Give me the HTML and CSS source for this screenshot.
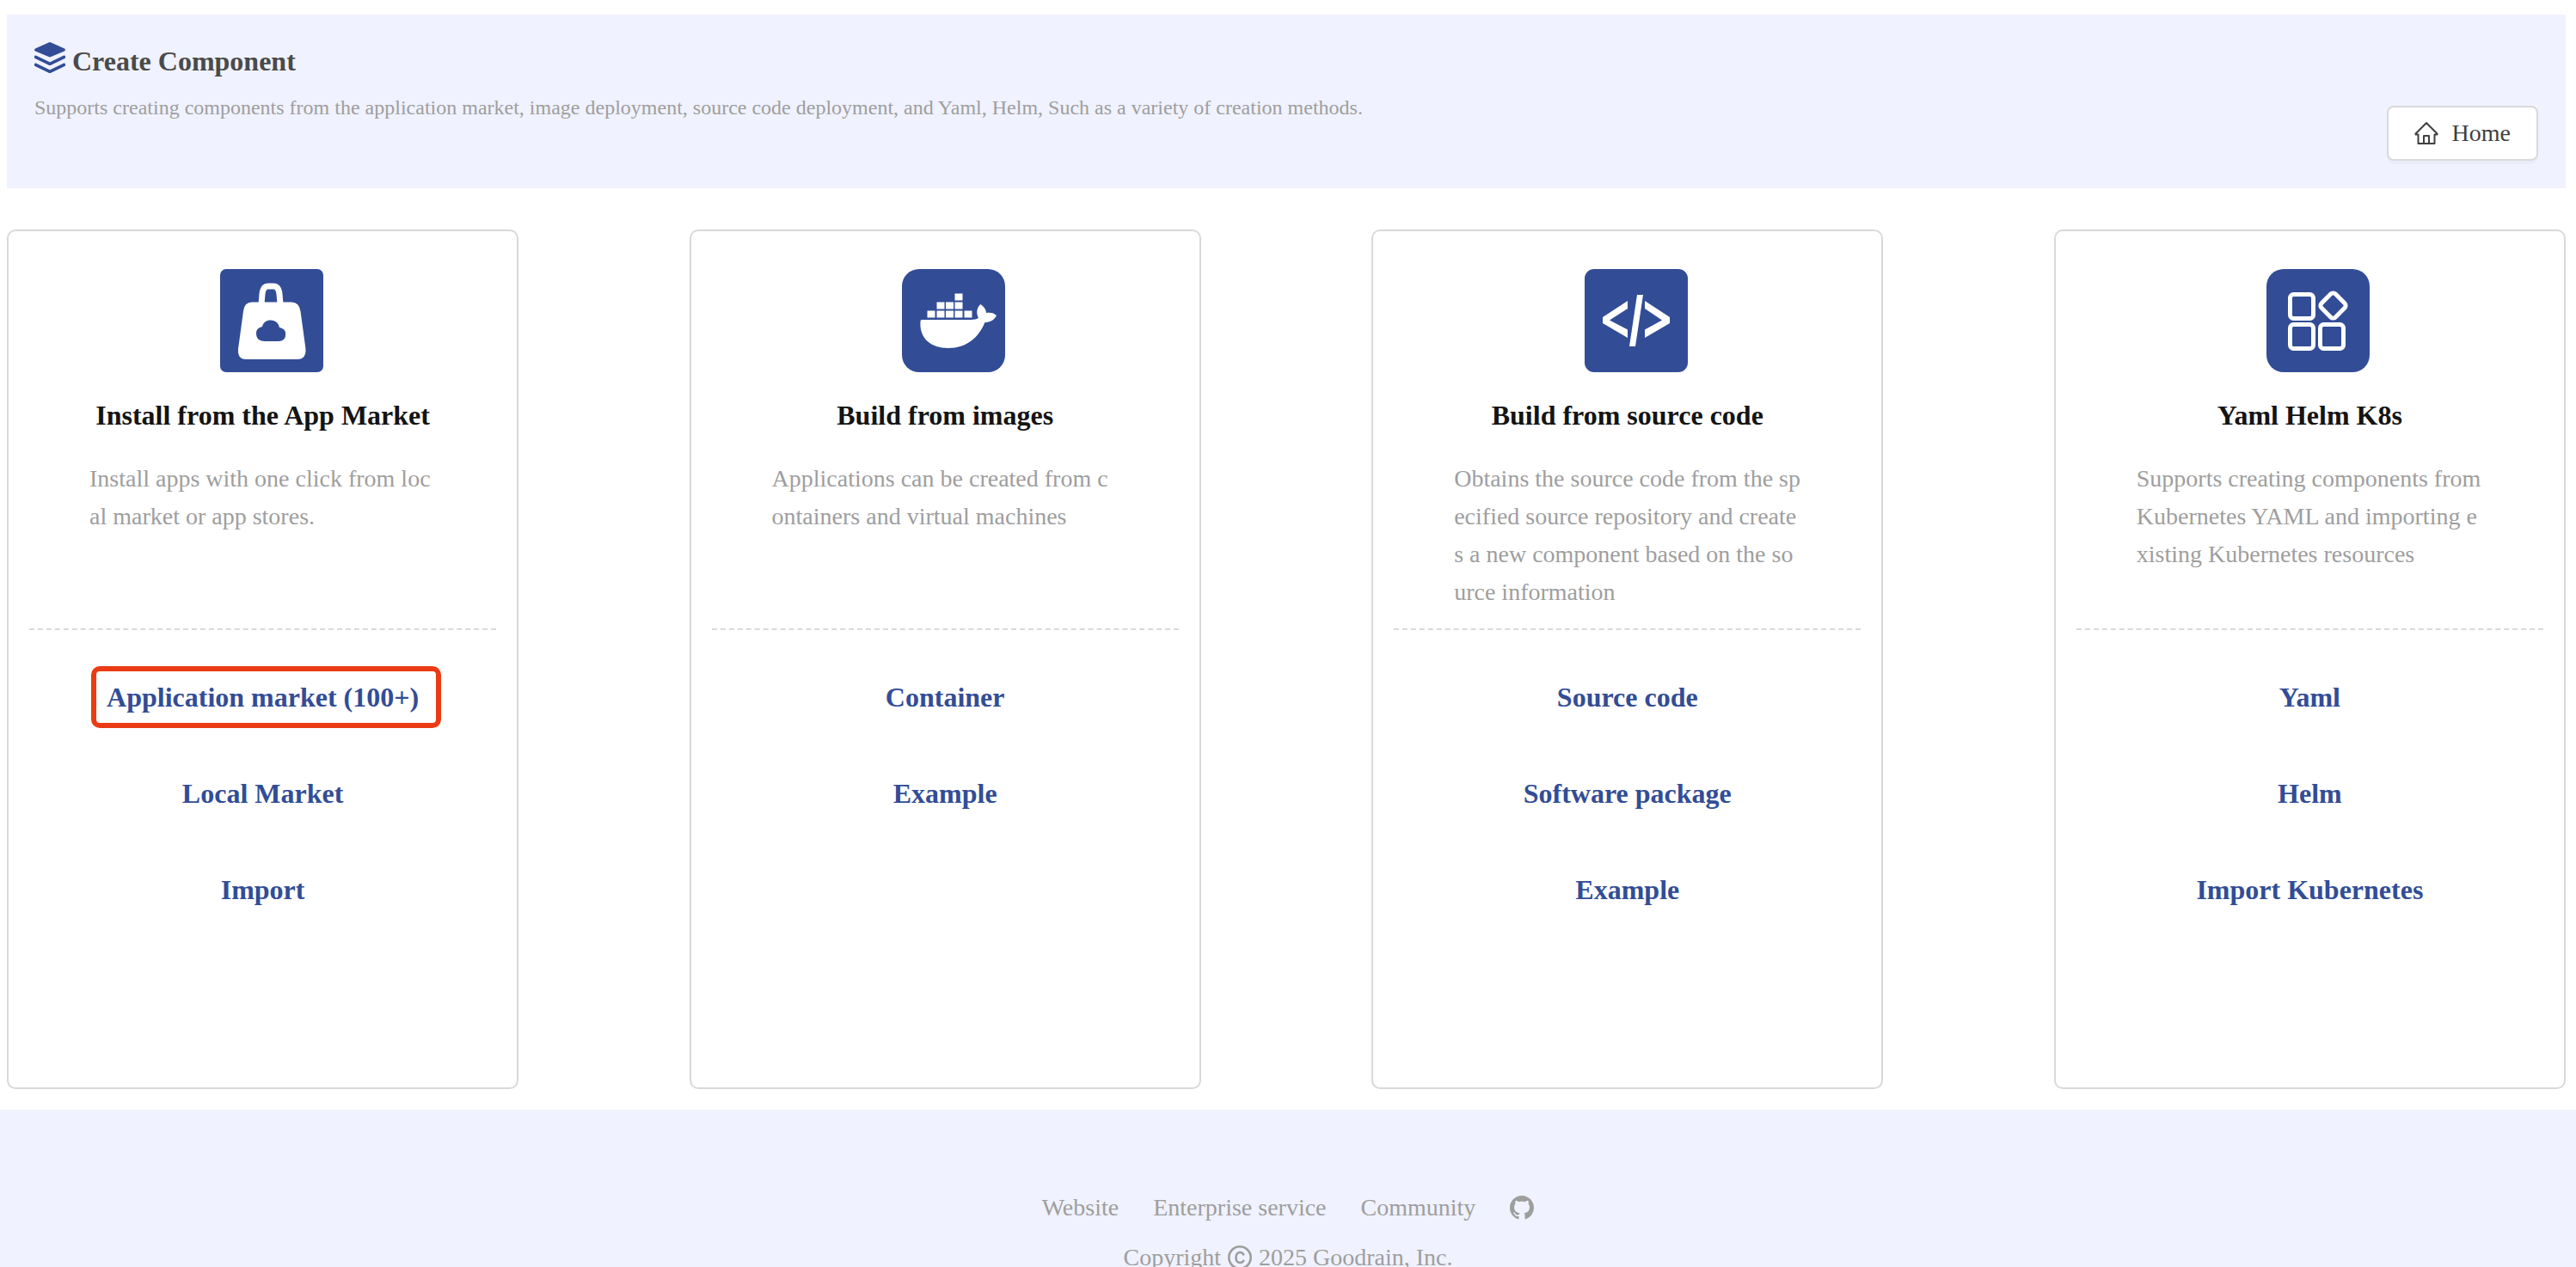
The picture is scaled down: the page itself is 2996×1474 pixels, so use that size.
FILE: index.html
```html
<!DOCTYPE html>
<html lang="en">
<head>
<meta charset="utf-8">
<title>Create Component</title>
<link rel="stylesheet" href="styles.css">
</head>
<body>
<main class="page">
  <header class="page-header">
    <div class="intro">
      <h1 class="page-title">
        <svg class="title-icon" viewBox="0 0 36 36" aria-hidden="true">
          <path d="M16.6.5Q18-.3 19.400.5L35 7.600Q37 9 35 10.400L19.400 17Q18 17.800 16.600 17L1 10.400Q-1 9 1 7.600Z"/>
          <path class="stroke" d="M1.500 17.300L18 25.300L34.500 17.300M1.500 26.300L18 34.300L34.500 26.300"/>
        </svg>
        <span>Create Component</span>
      </h1>
      <p class="page-text">Supports creating components from the application market, image deployment, source code deployment, and Yaml, Helm, Such as a variety of creation methods.</p>
    </div>
    <button class="home" type="button">
      <svg class="home-icon" viewBox="0 0 28 28" aria-hidden="true"><path d="M1.500 14.500L14 2L26.500 14.500V15.500H23.500V26H4.500V15.500H1.500ZM11 26V17H17V26"/></svg>
      <span>Home</span>
    </button>
  </header>

  <div class="cards">
    <section class="card">
      <div class="summary">
        <svg class="card-icon" viewBox="0 0 120 120" aria-hidden="true">
          <rect class="tile" width="120" height="120" rx="7"/>
          <path class="line-bag" d="M48 41L49 29Q50 20 56 20H62Q68 20 69 29L70 41"/>
          <path class="fill" d="M37 38.500H83Q92 38.500 93.500 49L99.500 93Q100 105 90 105H30Q20 105 21 93L27 49Q28 38.500 37 38.500Z"/>
          <path class="tile" d="M52 84C45 84 42 80 42 75C42 70 45 68 49 67C51 57 67 57 69 68C74 69 77 72 76 77C76 81 73 84 68 84Z"/>
        </svg>
        <h2 class="card-title">Install from the App Market</h2>
        <p class="card-text">Install apps with one click from local market or app stores.</p>
      </div>
      <nav class="links">
        <a class="link marked" href="#">Application market (100+)</a>
        <a class="link" href="#">Local Market</a>
        <a class="link" href="#">Import</a>
      </nav>
    </section>

    <section class="card">
      <div class="summary">
        <svg class="card-icon" viewBox="0 0 120 120" aria-hidden="true">
          <rect class="tile" width="120" height="120" rx="20"/>
          <path class="fill" d="M61.500 28.500h9v8h-9zM40.500 38.500h9v8h-9zM51 38.500h9v8h-9zM61.500 38.500h9v8h-9zM29.500 48.500h9v8h-9zM40.500 48.500h9v8h-9zM51 48.500h9v8h-9zM61.500 48.500h9v8h-9zM72.500 48.500h9v8h-9z"/>
          <path class="fill" d="M23 59H80C84 59 87 58 89 57C86 51 87 45 91.500 41C96 44 98 48 98 51C103 50 107 51 110 54C107 60 102 62 96.500 62C89 80 75 92 54 92C34 92 20 81 21.500 61Q21.500 59 23 59Z"/>
        </svg>
        <h2 class="card-title">Build from images</h2>
        <p class="card-text">Applications can be created from containers and virtual machines</p>
      </div>
      <nav class="links">
        <a class="link" href="#">Container</a>
        <a class="link" href="#">Example</a>
      </nav>
    </section>

    <section class="card">
      <div class="summary">
        <svg class="card-icon" viewBox="0 0 120 120" aria-hidden="true">
          <rect class="tile" width="120" height="120" rx="11"/>
          <path class="fill" d="M50 37V46L29 59.500L50 70.500V80L21 63V56ZM70 37V46L90 59.500L70 70.500V80L99 63V56ZM61 30H68L59 90H52Z"/>
        </svg>
        <h2 class="card-title">Build from source code</h2>
        <p class="card-text">Obtains the source code from the specified source repository and creates a new component based on the source information</p>
      </div>
      <nav class="links">
        <a class="link" href="#">Source code</a>
        <a class="link" href="#">Software package</a>
        <a class="link" href="#">Example</a>
      </nav>
    </section>

    <section class="card">
      <div class="summary">
        <svg class="card-icon" viewBox="0 0 120 120" aria-hidden="true">
          <rect class="tile" width="120" height="120" rx="20"/>
          <g class="line">
            <rect x="27.500" y="29.500" width="27" height="28" rx="4"/>
            <rect x="27.500" y="64.500" width="27" height="28" rx="4"/>
            <rect x="62.500" y="64.500" width="27" height="28" rx="4"/>
            <rect x="66" y="31" width="23" height="23" rx="4" transform="rotate(45 77.500 42.500)"/>
          </g>
        </svg>
        <h2 class="card-title">Yaml Helm K8s</h2>
        <p class="card-text">Supports creating components from Kubernetes YAML and importing existing Kubernetes resources</p>
      </div>
      <nav class="links">
        <a class="link" href="#">Yaml</a>
        <a class="link" href="#">Helm</a>
        <a class="link" href="#">Import Kubernetes</a>
      </nav>
    </section>
  </div>
</main>

<footer class="footer">
  <nav class="footer-links">
    <a href="#">Website</a>
    <a href="#">Enterprise service</a>
    <a href="#">Community</a>
    <a href="#" aria-label="GitHub"><svg class="footer-icon" viewBox="0 0 16 16" aria-hidden="true"><path d="M8 0C3.580 0 0 3.580 0 8c0 3.540 2.290 6.530 5.470 7.590.4.070.55-.17.55-.38 0-.19-.01-.82-.01-1.490-2.010.37-2.530-.49-2.690-.94-.09-.23-.48-.94-.82-1.130-.28-.15-.68-.52-.01-.53.63-.01 1.080.58 1.230.82.72 1.210 1.870.87 2.330.66.070-.52.28-.87.51-1.070-1.780-.2-3.640-.89-3.640-3.950 0-.87.31-1.590.82-2.150-.08-.2-.36-1.020.08-2.120 0 0 .67-.21 2.200.82.64-.18 1.320-.27 2-.27s1.360.09 2 .27c1.530-1.040 2.200-.82 2.200-.82.44 1.100.16 1.920.08 2.120.51.56.82 1.270.82 2.150 0 3.070-1.870 3.750-3.650 3.950.29.25.54.73.54 1.480 0 1.070-.01 1.930-.01 2.200 0 .21.15.46.55.38A8 8 0 0 0 16 8c0-4.420-3.580-8-8-8Z"/></svg></a>
  </nav>
  <p class="copyright">
    <span>Copyright</span>
    <svg class="footer-icon" viewBox="0 0 28 28" aria-hidden="true"><g class="ring"><circle cx="14" cy="14" r="12.700"/><path d="M18.500 11.500C18 9 16.500 8 14.200 8C11 8 9.500 10.500 9.500 14S11 20 14.200 20C16.500 20 18 19 18.500 16.800"/></g></svg>
    <span>2025 Goodrain, Inc.</span>
  </p>
</footer>
</body>
</html>
```
FILE: styles.css
```css
* {
  box-sizing: border-box;
}

body {
  margin: 0;
  min-height: 100vh;
  display: flex;
  flex-direction: column;
  background: #fff;
  color: #404040;
  font: 28px/44px "Liberation Serif", "Times New Roman", serif;
}

h1, h2, p {
  margin: 0;
}

a {
  color: inherit;
  text-decoration: none;
}

.page {
  padding: 17px 12px 24px 8px;
}

.page-header {
  display: flex;
  justify-content: space-between;
  align-items: flex-end;
  padding: 32px;
  background: #f0f2ff;
}

.intro {
  align-self: flex-start;
  padding-bottom: 46px;
}

.page-title {
  display: flex;
  gap: 8px;
  font-size: 32px;
  line-height: 44px;
  color: #4a4a4a;
}

.title-icon {
  width: 36px;
  height: 36px;
  fill: #324d96;
}

.title-icon .stroke {
  fill: none;
  stroke: #324d96;
  stroke-width: 3.600;
  stroke-linecap: round;
  stroke-linejoin: round;
}

.page-text {
  margin-top: 16px;
  font-size: 24px;
  line-height: 32px;
  color: #9e9e9e;
}

.home {
  display: flex;
  align-items: center;
  gap: 16px;
  height: 64px;
  padding: 0 30px;
  border: 2px solid #d9d9d9;
  border-radius: 8px;
  background: #fff;
  box-shadow: 0 4px 0 rgba(0, 0, 0, 0.02);
  color: #404040;
  font: inherit;
}

.home-icon {
  width: 28px;
  height: 28px;
  fill: none;
  stroke: #404040;
  stroke-width: 2;
  stroke-linejoin: round;
}

.cards {
  display: flex;
  justify-content: space-between;
  margin-top: 48px;
}

.card {
  width: 20%;
  min-height: 1000px;
  padding: 0 24px;
  border: 2px solid #d9d9d9;
  border-radius: 10px;
}

.summary {
  display: flex;
  flex-direction: column;
  align-items: center;
  min-height: 464px;
  padding-top: 44px;
  border-bottom: 2px dashed #d9d9d9;
}

.card-icon {
  width: 120px;
  height: 120px;
  margin-left: 20px;
}

.card-icon .tile {
  fill: #324d96;
}

.card-icon .fill {
  fill: #fff;
}

.card-icon .line,
.card-icon .line-bag {
  fill: none;
  stroke: #fff;
  stroke-width: 5;
}

.card-icon .line-bag {
  stroke-width: 7;
}

.card-title {
  margin-top: 28px;
  font-size: 32px;
  line-height: 44px;
  color: #141414;
}

.card-text {
  width: 100%;
  margin-top: 30px;
  padding: 0 70px;
  color: #9e9e9e;
  word-break: break-all;
}

.links {
  display: flex;
  flex-direction: column;
  align-items: center;
  gap: 68px;
  padding-top: 56px;
}

.link {
  position: relative;
  font-size: 32px;
  font-weight: bold;
  color: #324d96;
}

.marked::after {
  content: "";
  position: absolute;
  inset: -14px -26px -14px -18px;
  border: 6px solid #eb3b14;
  border-radius: 10px;
}

.footer {
  flex: 1;
  padding-top: 92px;
  background: #f0f2ff;
  color: #9e9e9e;
}

.footer-links,
.copyright {
  display: flex;
  justify-content: center;
  align-items: center;
}

.footer-links {
  gap: 40px;
}

.copyright {
  gap: 8px;
  margin-top: 14px;
}

.footer-icon {
  display: block;
  width: 28px;
  height: 28px;
  fill: #9e9e9e;
}

.ring {
  fill: none;
  stroke: #9e9e9e;
  stroke-width: 2.600;
}
```
